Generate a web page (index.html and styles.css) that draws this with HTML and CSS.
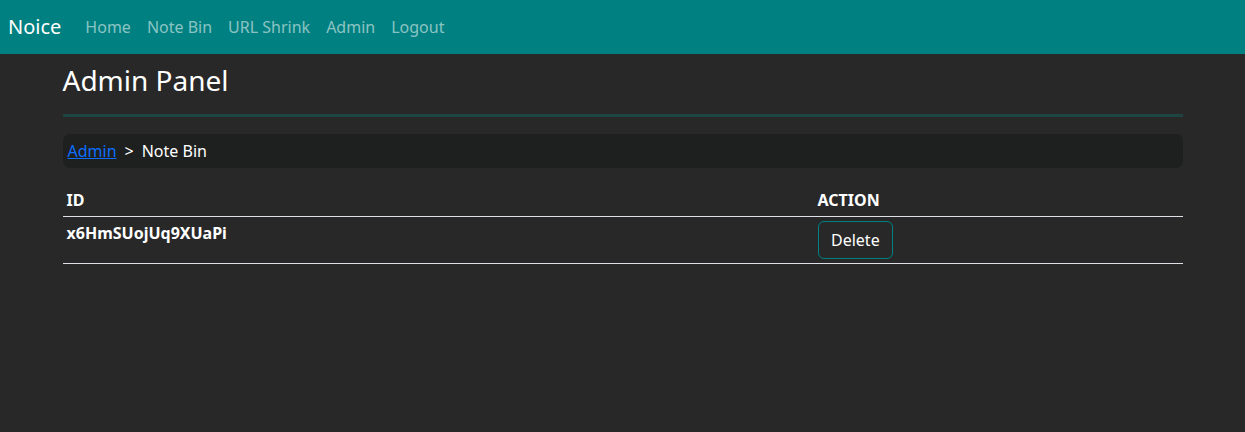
FILE: index.html
```html
<!DOCTYPE html>
<html lang="en">
<head>
<meta charset="utf-8">
<title>Admin Panel</title>
<link rel="stylesheet" href="styles.css">
</head>
<body>
<nav class="navbar">
  <a class="brand" href="#">Noice</a>
  <ul class="nav">
    <li><a href="#">Home</a></li>
    <li><a href="#">Note Bin</a></li>
    <li><a href="#">URL Shrink</a></li>
    <li><a href="#">Admin</a></li>
    <li><a href="#">Logout</a></li>
  </ul>
</nav>
<main class="container">
  <h1 class="title">Admin Panel</h1>
  <hr class="divider">
  <div class="breadcrumb">
    <a class="crumb-link" href="#">Admin</a>
    <span class="crumb-sep">&gt;</span>
    <span class="crumb-current">Note Bin</span>
  </div>
  <table class="table">
    <thead>
      <tr><th class="col-id">ID</th><th>ACTION</th></tr>
    </thead>
    <tbody>
      <tr><td class="id-cell">x6HmSUojUq9XUaPi</td><td><button class="btn">Delete</button></td></tr>
    </tbody>
  </table>
</main>
</body>
</html>
```
FILE: styles.css
```css
* { box-sizing: border-box; }
html, body { margin: 0; padding: 0; }
body {
  background: #282828;
  color: #ffffff;
  font-family: "Noto Sans", "Open Sans", sans-serif;
  font-size: 16px;
  line-height: 1.5;
}
.navbar {
  background: #008080;
  height: 54px;
  display: flex;
  align-items: center;
  padding: 0 8px;
}
.brand {
  color: #ffffff;
  text-decoration: none;
  font-size: 20px;
  margin-right: 16px;
}
.nav {
  list-style: none;
  display: flex;
  margin: 0;
  padding: 0;
}
.nav a {
  display: block;
  padding: 8px;
  color: rgba(255, 255, 255, 0.55);
  text-decoration: none;
}
.container {
  max-width: 1120px;
  margin: 0 auto;
}
.title {
  font-size: 28px;
  font-weight: 400;
  line-height: 1.2;
  margin: 0;
  padding-top: 10px;
}
.divider {
  border: 0;
  height: 3px;
  background: #1f4543;
  margin: 16px 0 17px;
}
.breadcrumb {
  background: #1e1f1f;
  border-radius: 7px;
  height: 34px;
  padding: 5px 5px;
  display: flex;
  align-items: center;
  gap: 8px;
}
.crumb-link { color: #0d6efd; text-decoration: underline; }
.crumb-sep, .crumb-current { color: #ffffff; }
.table {
  width: 100%;
  border-collapse: collapse;
  margin-top: 16px;
}
.table th, .table td {
  text-align: left;
  vertical-align: top;
  padding: 4px;
  font-weight: 700;
}
.col-id { width: 751px; }
.table thead th { border-bottom: 1px solid #dee2e6; }
.table tbody td { border-bottom: 1px solid #dee2e6; }
.btn {
  font-family: inherit;
  font-size: 16px;
  line-height: 1.5;
  color: #ffffff;
  background: transparent;
  border: 1px solid #008080;
  border-radius: 6px;
  padding: 6px 12.5px;
}
```
